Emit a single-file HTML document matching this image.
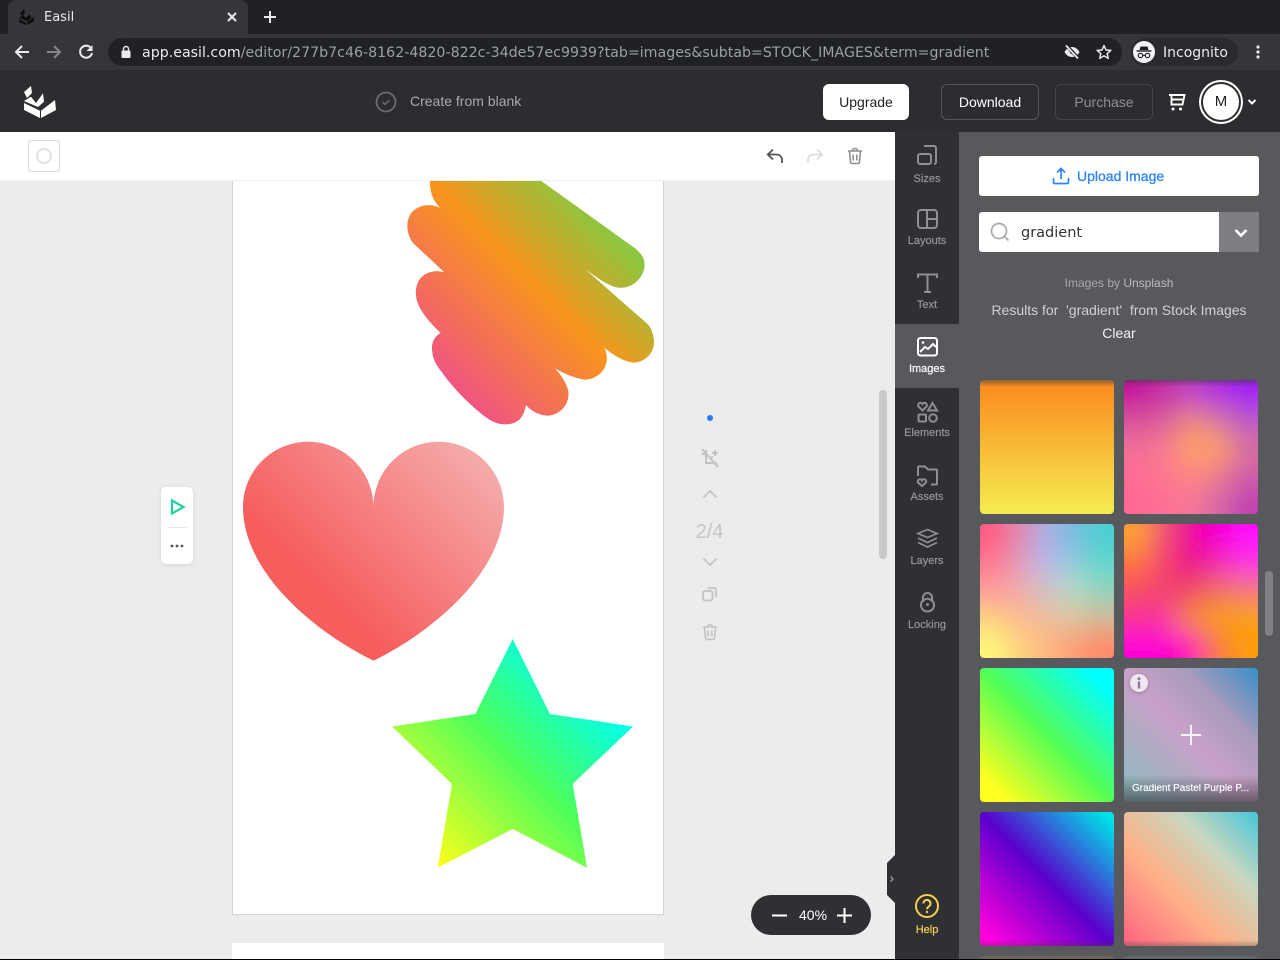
<!DOCTYPE html>
<html><head><meta charset="utf-8"><title>Easil</title>
<style>
*{box-sizing:border-box;margin:0;padding:0}
html,body{width:1280px;height:960px;overflow:hidden;background:#ececec;font-family:"Liberation Sans",sans-serif}
.a{position:absolute}
.t{position:absolute;white-space:nowrap;line-height:1}
.c{transform:translateX(-50%)}
.d{font-family:"DejaVu Sans",sans-serif}
svg{position:absolute;overflow:visible}
.th{position:absolute;width:134px;height:134px;border-radius:4px}
.m{overflow:hidden}
.lbl{position:absolute;left:895px;width:64px;text-align:center;font-size:11px;line-height:1;color:#98999d;-webkit-text-stroke:.15px #98999d}
.btn{position:absolute;top:84px;height:36px;border-radius:6px;font-size:14px;line-height:34px;text-align:center}
</style></head><body>

<!-- browser chrome -->
<div class="a" style="left:0;top:0;width:1280px;height:34px;background:#202124"></div>
<div class="a" style="left:8px;top:0;width:240px;height:34px;background:#35363a;border-radius:8px 8px 0 0"></div>
<svg style="left:18px;top:8px" width="18" height="18" viewBox="0 0 18 18"><g fill="#0d0d0d"><polygon points="2,6 6,1 7,5 4,8"/><polygon points="1,10 5,7 8,10 12,6 13,10 9,13"/><polygon points="1,11 8,15 8,17 1,14"/><polygon points="9,14 16,9 16,13 9,17"/></g></svg>
<div class="t d" style="left:44px;top:11px;font-size:13px;color:#e8eaed">Easil</div>
<svg style="left:226px;top:11px" width="12" height="12"><path d="M2 2l8 8M10 2l-8 8" stroke="#e8eaed" stroke-width="2" fill="none"/></svg>
<svg style="left:263px;top:10px" width="14" height="14"><path d="M7 1v12M1 7h12" stroke="#e8eaed" stroke-width="2" fill="none"/></svg>

<div class="a" style="left:0;top:34px;width:1280px;height:37px;background:#35363a;border-bottom:1px solid #2a2b2e"></div>
<svg style="left:14px;top:44px" width="16" height="16"><path d="M15 8H2M8 2L2 8l6 6" stroke="#e8eaed" stroke-width="2" fill="none"/></svg>
<svg style="left:46px;top:44px" width="16" height="16"><path d="M1 8h13M8 2l6 6-6 6" stroke="#85878b" stroke-width="2" fill="none"/></svg>
<svg style="left:78px;top:44px" width="16" height="16"><path d="M13.500 5A6 6 0 1 0 14 9" stroke="#e8eaed" stroke-width="2" fill="none"/><path d="M14.500 1v6h-6z" fill="#e8eaed"/></svg>
<div class="a" style="left:108px;top:38px;width:1014px;height:28px;background:#202124;border-radius:14px"></div>
<svg style="left:120px;top:45px" width="12" height="14"><rect x="1.500" y="5.500" width="9" height="7.500" rx="1" fill="#e8eaed"/><path d="M3.500 6V4a2.500 2.500 0 0 1 5 0v2" stroke="#e8eaed" stroke-width="1.400" fill="none"/></svg>
<div class="t d" style="left:142px;top:46px;font-size:14.200px;color:#e8eaed">app.easil.com<span style="color:#9aa0a6">/editor/277b7c46-8162-4820-822c-34de57ec9939?tab=images&amp;subtab=STOCK_IMAGES&amp;term=gradient</span></div>
<svg style="left:1063px;top:44px" width="18" height="16" viewBox="0 0 18 16"><path d="M1.500 8C3.500 4.500 6 3 9 3s5.500 1.500 7.500 5c-2 3.500-4.500 5-7.500 5S3.500 11.500 1.500 8z" fill="#e8eaed"/><circle cx="9" cy="8" r="2" fill="#202124"/><path d="M3 1l12 13" stroke="#202124" stroke-width="3.500"/><path d="M3 1.500l12 13" stroke="#e8eaed" stroke-width="1.800"/></svg>
<svg style="left:1096px;top:44px" width="16" height="16" viewBox="0 0 16 16"><path d="M8 1.500l2 4.500 4.800.4-3.600 3.200 1.100 4.800L8 11.900l-4.300 2.500 1.100-4.800L1.200 6.400 6 6z" fill="none" stroke="#e8eaed" stroke-width="1.500" stroke-linejoin="round"/></svg>
<div class="a" style="left:1131px;top:38px;width:107px;height:28px;background:#292a2d;border-radius:14px"></div>
<svg style="left:1133px;top:41px" width="22" height="22" viewBox="0 0 22 22"><circle cx="11" cy="11" r="11" fill="#f1f3f4"/><path d="M7.500 5.500h7l1 3.500h-9z" fill="#202124"/><rect x="3.500" y="9.300" width="15" height="1.400" fill="#202124"/><circle cx="7.500" cy="14.500" r="2.200" fill="none" stroke="#202124" stroke-width="1.200"/><circle cx="14.500" cy="14.500" r="2.200" fill="none" stroke="#202124" stroke-width="1.200"/><path d="M9.700 14.300h2.600" stroke="#202124" stroke-width="1.100"/></svg>
<div class="t d" style="left:1163px;top:46px;font-size:14px;color:#e8eaed">Incognito</div>
<svg style="left:1255px;top:44px" width="6" height="16"><circle cx="3" cy="3" r="1.600" fill="#e8eaed"/><circle cx="3" cy="8" r="1.600" fill="#e8eaed"/><circle cx="3" cy="13" r="1.600" fill="#e8eaed"/></svg>

<!-- app header -->
<div class="a" style="left:0;top:71px;width:1280px;height:61px;background:#2c2d30"></div>
<svg style="left:0;top:0" width="80" height="130"><g fill="#fff"><polygon points="24,92 31,86 32,93 27,98"/><polygon points="24,101 31,96.700 36,103 43,93.300 44,101.700 38,107"/><polygon points="24,103 40,110.700 40,118 24,110"/><polygon points="41,110.700 55,100 56,110 41,118"/></g></svg>
<svg style="left:375px;top:91px" width="22" height="22"><circle cx="11" cy="11" r="9.500" fill="none" stroke="#6b6c70" stroke-width="1.800"/><path d="M7.500 11l2.500 2.500 4.500-4.500" fill="none" stroke="#6b6c70" stroke-width="1.500"/></svg>
<div class="t" style="left:410px;top:94px;font-size:14px;color:#a9aaad">Create from blank</div>
<div class="btn" style="left:823px;width:86px;background:#fff;color:#222;line-height:36px">Upgrade</div>
<div class="btn" style="left:941px;width:98px;border:1px solid #55565a;color:#fff">Download</div>
<div class="btn" style="left:1055px;width:98px;border:1px solid #434448;color:#8f9094">Purchase</div>
<svg style="left:1168px;top:92px" width="18" height="20" viewBox="0 0 18 20"><path d="M1 3H16.500L14.500 12.500H3.500V3M3.500 7.500H15.500" fill="none" stroke="#fff" stroke-width="1.900"/><circle cx="5" cy="17" r="1.500" fill="#fff"/><circle cx="12.500" cy="17" r="1.500" fill="#fff"/></svg>
<div class="a" style="left:1199px;top:80px;width:44px;height:44px;border-radius:50%;background:#fff"></div>
<div class="a" style="left:1201px;top:82px;width:40px;height:40px;border-radius:50%;background:#2c2d30"></div>
<div class="a" style="left:1203px;top:84px;width:36px;height:36px;border-radius:50%;background:#fff;color:#222;font-size:15px;line-height:36px;text-align:center">M</div>
<svg style="left:1247px;top:98px" width="10" height="8"><path d="M1.500 2L5 5.500 8.500 2" stroke="#fff" stroke-width="2" fill="none"/></svg>

<!-- canvas -->
<div class="a" style="left:232px;top:170px;width:432px;height:745px;background:#fff;border:1px solid #d4d4d4"></div>
<div class="a" style="left:232px;top:943px;width:432px;height:17px;background:#fff"></div>
<svg style="left:0;top:0" width="895" height="960">
<defs>
<linearGradient id="g1" gradientUnits="userSpaceOnUse" x1="442" y1="372" x2="597.500" y2="217.500"><stop offset="0" stop-color="#f0567f"/><stop offset=".58" stop-color="#f8951d"/><stop offset="1" stop-color="#8dc63f"/></linearGradient>
<linearGradient id="g2" gradientUnits="userSpaceOnUse" x1="270" y1="570" x2="432" y2="408"><stop offset=".1" stop-color="#f65d5d"/><stop offset="1" stop-color="#f5abab"/></linearGradient>
<linearGradient id="g3" gradientUnits="userSpaceOnUse" x1="437" y1="868" x2="606" y2="699"><stop offset="0" stop-color="#ffff1a"/><stop offset=".556" stop-color="#4dff5c"/><stop offset="1" stop-color="#00fff0"/></linearGradient>
<filter id="bl" x="-10%" y="-10%" width="120%" height="120%"><feGaussianBlur stdDeviation=".5"/></filter>
</defs>
<path fill="url(#g1)" d="M430 170 C429 190 431 198 440 207.700 C430 203 420 205 413 211 C406 218 405 232 413 243 L444.300 272.300 C432 269 422 274 418 282 C414 291 416 301 420 308 C425 317 433 326 440.700 333 C433 337 431 345 432.300 352 C433 360 437 366 441 371 C452 387 473 409 490 420 C500 426 513 426 520 419 C524 414 525 410 526 405 C531 411 539 415 547 415.700 C560 415 569 405 568.500 393 C568 385 561 375 555 368.300 C563 373 573 378 585 379.700 C598 379 608 369 606.700 356 C606.500 353 605.500 350 604.300 347.700 C612 354 622 361 633.300 362.700 C646 362 655 352 654 340 C653 333 651 327 646.700 323.300 L585 269 C593 275 603 282 610 285 C617 289 627 289 635 283 C645 275 648 262 640 253 C638 251 637 250 635 248.300 L526 170 Z"/>
<path fill="url(#g2)" d="M373.500 507C373.500 471 344 441.700 308 441.700C272 441.700 243 471 243 507C243 575 320 635 373.500 660.600C427 635 504 575 504 507C504 471 474.500 441.700 438.500 441.700C402.500 441.700 373.500 471 373.500 507Z"/>
<polygon fill="url(#g3)" points="512.700,639 550,714 633,726.500 572.700,784 587,867.800 512.700,829 437.700,867.800 452,784 392,726.500 475.300,714"/>
</svg>

<!-- editor toolbar -->
<div class="a" style="left:0;top:132px;width:895px;height:49px;background:#fff;border-bottom:1px solid #f0f0f0"></div>
<div class="a" style="left:28px;top:140px;width:32px;height:32px;border:1px solid #dcdcdc;border-radius:3px"></div>
<svg style="left:36px;top:148px" width="16" height="16"><circle cx="8" cy="8" r="7" fill="none" stroke="#dedede" stroke-width="1.800"/></svg>
<svg style="left:766px;top:147px" width="18" height="18" viewBox="0 0 18 18"><path d="M7 2.500L1.800 7.500 7 12.500M2.500 7.500H10c3.500 0 6 2 6 5.500v3" fill="none" stroke="#555" stroke-width="1.800"/></svg>
<svg style="left:806px;top:147px" width="18" height="18" viewBox="0 0 18 18"><path d="M11 2.500l5.200 5-5.200 5M15.500 7.500H8c-3.500 0-6 2-6 5.500v3" fill="none" stroke="#dcdcdc" stroke-width="1.800"/></svg>
<svg style="left:846px;top:147px" width="18" height="18" viewBox="0 0 18 18"><path d="M2 4h14M6.500 4c0-1.500 1-2.500 2.500-2.500s2.500 1 2.500 2.500M3.500 4l1 11a1.500 1.500 0 0 0 1.500 1.500h6a1.500 1.500 0 0 0 1.500-1.500l1-11M7.200 7.500v6M10.800 7.500v6" fill="none" stroke="#8f8f8f" stroke-width="1.600"/></svg>

<!-- left play widget -->
<div class="a" style="left:161px;top:487px;width:32px;height:77px;background:#fff;border-radius:5px;box-shadow:0 1px 4px rgba(0,0,0,.1)"></div>
<svg style="left:170px;top:499px" width="16" height="16"><path d="M2 1.500L13.500 8 2 14.500z" fill="none" stroke="#1dd1a1" stroke-width="2.200"/></svg>
<div class="a" style="left:167px;top:527px;width:20px;height:1px;background:#e6e6e6"></div>
<svg style="left:170px;top:543px" width="14" height="6"><circle cx="2" cy="3" r="1.400" fill="#555"/><circle cx="7" cy="3" r="1.400" fill="#555"/><circle cx="12" cy="3" r="1.400" fill="#555"/></svg>

<!-- page controls -->
<div class="a" style="left:707px;top:415px;width:6px;height:6px;border-radius:50%;background:#2c7bf6"></div>
<svg style="left:700px;top:448px" width="20" height="20" viewBox="0 0 20 20"><g fill="none" stroke="#c3c3c3" stroke-width="2"><path d="M2 1l16 18M6 2v13h11M2 6h4M15 2v6M12 5h6M12 8v2"/></g></svg>
<svg style="left:702px;top:488px" width="16" height="12"><path d="M1.500 9.500L8 3l6.500 6.500" fill="none" stroke="#c8c8c8" stroke-width="2"/></svg>
<div class="t c" style="left:709.500px;top:522px;font-size:20px;color:#c4c4c4">2/4</div>
<svg style="left:702px;top:556px" width="16" height="12"><path d="M1.500 2.500L8 9l6.500-6.500" fill="none" stroke="#c8c8c8" stroke-width="2"/></svg>
<svg style="left:702px;top:586px" width="16" height="16"><rect x="1" y="5" width="9.500" height="9.500" rx="2" fill="none" stroke="#c3c3c3" stroke-width="1.800"/><path d="M5.500 2H12a2 2 0 0 1 2 2v7" fill="none" stroke="#c3c3c3" stroke-width="1.800"/></svg>
<svg style="left:701px;top:623px" width="18" height="18" viewBox="0 0 18 18"><path d="M2 4h14M6.500 4c0-1.500 1-2.500 2.500-2.500s2.500 1 2.500 2.500M3.500 4l1 11a1.500 1.500 0 0 0 1.500 1.500h6a1.500 1.500 0 0 0 1.500-1.500l1-11M7.200 7.500v6M10.800 7.500v6" fill="none" stroke="#c3c3c3" stroke-width="1.600"/></svg>

<div class="a" style="left:879px;top:390px;width:8px;height:169px;background:#c9c9c9;border-radius:4px"></div>

<!-- zoom control -->
<div class="a" style="left:751px;top:895px;width:120px;height:40px;background:#2f3034;border-radius:20px"></div>
<svg style="left:771px;top:907px" width="90" height="18"><path d="M1 8.500h15M66 8.500h15M73.500 1v15" stroke="#fff" stroke-width="2" fill="none"/></svg>
<div class="t" style="left:799px;top:908px;font-size:14px;color:#fff">40%</div>

<!-- sidebar -->
<div class="a" style="left:895px;top:132px;width:64px;height:828px;background:#2f3034"></div>
<div class="a" style="left:959px;top:132px;width:321px;height:828px;background:#58595d"></div>
<div class="a" style="left:895px;top:324px;width:64px;height:64px;background:#58595d"></div>
<div class="a" style="left:895px;top:312px;width:64px;height:12px;background:#2f3034;border-radius:0 0 8px 0"></div>
<div class="a" style="left:895px;top:388px;width:64px;height:12px;background:#2f3034;border-radius:0 8px 0 0"></div>
<svg style="left:887px;top:855px" width="8" height="48"><path d="M8 0L0 8v32l8 8z" fill="#2f3034"/><path d="M3.500 21.500L6 24l-2.500 2.500" stroke="#9a9b9f" stroke-width="1.300" fill="none"/></svg>

<svg style="left:895px;top:132px" width="64" height="520" viewBox="0 0 64 520"><g fill="none" stroke="#8e8f93" stroke-width="2">
<path d="M29 14h10a2 2 0 0 1 2 2v14a2 2 0 0 1-2 2"/><rect x="23" y="22" width="13" height="10" rx="2"/>
<rect x="23" y="78" width="19" height="18" rx="3"/><path d="M32 78v18M32 87h10"/>
<path d="M23 146v-3.500h19v3.500M32.500 142.500v17.500M29 160h7"/>
</g>
<g fill="none" stroke="#fff" stroke-width="2"><rect x="23" y="206" width="19" height="17.500" rx="2.500"/><path d="M25 220l5-5 3 2 5-5 3 3"/></g><circle cx="28" cy="210.500" r="1.300" fill="#fff"/>
<g fill="none" stroke="#8e8f93" stroke-width="2">
<path d="M27.500 278.500l-4-4a2.300 2.300 0 0 1 4-2.500 2.300 2.300 0 0 1 4 2.500z"/><path d="M37.500 271l4.500 7.500h-9z"/>
<rect x="23.500" y="282.500" width="7.500" height="7" rx="1"/><circle cx="38" cy="286" r="3.800"/>
<path d="M23 344v-8.500a1 1 0 0 1 1-1h6l3 3h8a1 1 0 0 1 1 1v13a1 1 0 0 1-1 1h-5"/><path d="M27 354l-4-3.500a2 2 0 0 1 4-2 2 2 0 0 1 4 2z"/>
<path d="M32.500 397.500l9.500 4-9.500 4-9.500-4zM23 406l9.500 4.500 9.500-4.500M23 410.500l9.500 4.500 9.500-4.500" stroke-width="1.700"/>
<path d="M28 470v-4.500a4.500 4.500 0 0 1 9 0v4.500"/><path d="M32.500 466.500c4 1.500 6.500 2.500 6.500 6.500 0 4-3 6.500-6.500 6.500s-6.500-2.500-6.500-6.500c0-4 2.500-5 6.500-6.500z"/>
</g><circle cx="32.500" cy="472.500" r="1.500" fill="#8e8f93"/></svg>
<div class="lbl" style="top:174px">Sizes</div>
<div class="lbl" style="top:236px">Layouts</div>
<div class="lbl" style="top:300px">Text</div>
<div class="lbl" style="top:364px;color:#fff;-webkit-text-stroke:.2px #fff">Images</div>
<div class="lbl" style="top:428px">Elements</div>
<div class="lbl" style="top:492px">Assets</div>
<div class="lbl" style="top:556px">Layers</div>
<div class="lbl" style="top:620px">Locking</div>
<svg style="left:914px;top:893px" width="26" height="26"><circle cx="13" cy="13" r="11" fill="none" stroke="#f6d04d" stroke-width="2"/><path d="M9.500 10.500a3.500 3.500 0 1 1 5.500 2.800c-1.300.9-2 1.500-2 3" fill="none" stroke="#f6d04d" stroke-width="2"/><circle cx="13" cy="19" r="1.200" fill="#f6d04d"/></svg>
<div class="lbl" style="top:925px;color:#f6d04d;-webkit-text-stroke:.2px #f6d04d">Help</div>

<!-- right panel -->
<div class="a" style="left:979px;top:156px;width:280px;height:40px;background:#fff;border-radius:3px"></div>
<svg style="left:1052px;top:167px" width="18" height="18" viewBox="0 0 18 18"><path d="M9 12V2M5 5.500L9 1.500l4 4M1.500 11v4.500a1 1 0 0 0 1 1h13a1 1 0 0 0 1-1V11" fill="none" stroke="#2c84f6" stroke-width="1.700"/></svg>
<div class="t" style="left:1077px;top:169px;font-size:14px;color:#2c84f6;-webkit-text-stroke:.3px #2c84f6">Upload Image</div>
<div class="a" style="left:979px;top:212px;width:280px;height:40px;background:#fff;border-radius:3px;overflow:hidden"><div class="a" style="left:240px;top:0;width:40px;height:40px;background:#7c7e82"></div></div>
<svg style="left:990px;top:222px" width="20" height="20"><circle cx="9" cy="9" r="7.500" fill="none" stroke="#a9a9a9" stroke-width="1.700"/><path d="M14.500 14.500l4 4" stroke="#a9a9a9" stroke-width="1.700"/></svg>
<div class="t d" style="left:1021px;top:226px;font-size:14.500px;color:#333">gradient</div>
<svg style="left:1234px;top:228px" width="14" height="10"><path d="M1.500 2L7 7.500 12.500 2" fill="none" stroke="#fff" stroke-width="2.600"/></svg>
<div class="t c" style="left:1119px;top:277px;font-size:12px;color:#a8a9ac">Images by <span style="color:#bcbdc0">Unsplash</span></div>
<div class="t c" style="left:1119px;top:303px;font-size:14px;color:#d0d1d3">Results for &nbsp;'gradient'&nbsp; from Stock Images</div>
<div class="t c" style="left:1119px;top:326px;font-size:14px;color:#f2f2f2">Clear</div>

<!-- thumbnails -->
<div class="th" style="left:980px;top:380px;background:linear-gradient(180deg,rgba(60,60,60,.55) 0,rgba(60,60,60,0) 7px),linear-gradient(180deg,#fb8d1e 5%,#f5e950 96%)"></div>

<div class="th m" style="left:1124px;top:380px"><svg width="134" height="134" viewBox="0 0 5 5" style="left:0;top:0"><g filter="url(#bl)">
<rect x="-2" y="-2" width="3" height="3" fill="#c4109c"/><rect x="1" y="-2" width="1" height="3" fill="#c62ea6"/><rect x="2" y="-2" width="1" height="3" fill="#c040c8"/><rect x="3" y="-2" width="1" height="3" fill="#b02ae0"/><rect x="4" y="-2" width="3" height="3" fill="#a21cf5"/>
<rect x="-2" y="1" width="3" height="1" fill="#d8509c"/><rect x="1" y="1" width="1" height="1" fill="#d85a9c"/><rect x="2" y="1" width="1" height="1" fill="#ee8a80"/><rect x="3" y="1" width="1" height="1" fill="#d878a0"/><rect x="4" y="1" width="3" height="1" fill="#bb58c8"/>
<rect x="-2" y="2" width="3" height="1" fill="#f0709a"/><rect x="1" y="2" width="1" height="1" fill="#f87c90"/><rect x="2" y="2" width="1" height="1" fill="#ffa060"/><rect x="3" y="2" width="1" height="1" fill="#ffa064"/><rect x="4" y="2" width="3" height="1" fill="#d8709c"/>
<rect x="-2" y="3" width="3" height="1" fill="#ff6c94"/><rect x="1" y="3" width="1" height="1" fill="#ff7890"/><rect x="2" y="3" width="1" height="1" fill="#ff8a80"/><rect x="3" y="3" width="1" height="1" fill="#f08088"/><rect x="4" y="3" width="3" height="1" fill="#d060a8"/>
<rect x="-2" y="4" width="3" height="3" fill="#ff6b94"/><rect x="1" y="4" width="1" height="3" fill="#ff6e94"/><rect x="2" y="4" width="1" height="3" fill="#f87898"/><rect x="3" y="4" width="1" height="3" fill="#d86aa8"/><rect x="4" y="4" width="3" height="3" fill="#c040b0"/>
</g></svg><div class="a" style="left:0;top:0;width:134px;height:7px;background:linear-gradient(180deg,rgba(60,60,60,.5),rgba(60,60,60,0))"></div></div>

<div class="th m" style="left:980px;top:524px"><svg width="134" height="134" viewBox="0 0 5 5" style="left:0;top:0"><g filter="url(#bl)">
<rect x="-2" y="-2" width="3" height="3" fill="#ff5c82"/><rect x="1" y="-2" width="1" height="3" fill="#e088b0"/><rect x="2" y="-2" width="1" height="3" fill="#a8b0e8"/><rect x="3" y="-2" width="1" height="3" fill="#78bce0"/><rect x="4" y="-2" width="3" height="3" fill="#48d0d2"/>
<rect x="-2" y="1" width="3" height="1" fill="#ff7a90"/><rect x="1" y="1" width="1" height="1" fill="#e0a0c0"/><rect x="2" y="1" width="1" height="1" fill="#bcb8ec"/><rect x="3" y="1" width="1" height="1" fill="#90d0dc"/><rect x="4" y="1" width="3" height="1" fill="#60d8cc"/>
<rect x="-2" y="2" width="3" height="1" fill="#ff9c9c"/><rect x="1" y="2" width="1" height="1" fill="#f0aaa8"/><rect x="2" y="2" width="1" height="1" fill="#d0c4c4"/><rect x="3" y="2" width="1" height="1" fill="#b4dcc4"/><rect x="4" y="2" width="3" height="1" fill="#90d4bc"/>
<rect x="-2" y="3" width="3" height="1" fill="#ffd080"/><rect x="1" y="3" width="1" height="1" fill="#ffb890"/><rect x="2" y="3" width="1" height="1" fill="#f0c0a0"/><rect x="3" y="3" width="1" height="1" fill="#d8c8a0"/><rect x="4" y="3" width="3" height="1" fill="#d0b898"/>
<rect x="-2" y="4" width="3" height="3" fill="#fff87a"/><rect x="1" y="4" width="1" height="3" fill="#ffd080"/><rect x="2" y="4" width="1" height="3" fill="#ffb880"/><rect x="3" y="4" width="1" height="3" fill="#ff9c78"/><rect x="4" y="4" width="3" height="3" fill="#ff8a66"/>
</g></svg></div>

<div class="th m" style="left:1124px;top:524px"><svg width="134" height="134" viewBox="0 0 5 5" style="left:0;top:0"><g filter="url(#bl)">
<rect x="-2" y="-2" width="3" height="3" fill="#ffa030"/><rect x="1" y="-2" width="1" height="3" fill="#f04a70"/><rect x="2" y="-2" width="1" height="3" fill="#ec0098"/><rect x="3" y="-2" width="1" height="3" fill="#f505d0"/><rect x="4" y="-2" width="3" height="3" fill="#ff10ff"/>
<rect x="-2" y="1" width="3" height="1" fill="#ff7040"/><rect x="1" y="1" width="1" height="1" fill="#f54070"/><rect x="2" y="1" width="1" height="1" fill="#ec0088"/><rect x="3" y="1" width="1" height="1" fill="#f02aa8"/><rect x="4" y="1" width="3" height="1" fill="#ff30e0"/>
<rect x="-2" y="2" width="3" height="1" fill="#f85060"/><rect x="1" y="2" width="1" height="1" fill="#f54070"/><rect x="2" y="2" width="1" height="1" fill="#f04a60"/><rect x="3" y="2" width="1" height="1" fill="#f2705c"/><rect x="4" y="2" width="3" height="1" fill="#f47a70"/>
<rect x="-2" y="3" width="3" height="1" fill="#fa3090"/><rect x="1" y="3" width="1" height="1" fill="#f830a0"/><rect x="2" y="3" width="1" height="1" fill="#f88a28"/><rect x="3" y="3" width="1" height="1" fill="#fba010"/><rect x="4" y="3" width="3" height="1" fill="#fba010"/>
<rect x="-2" y="4" width="3" height="3" fill="#ff00d8"/><rect x="1" y="4" width="1" height="3" fill="#ff00d0"/><rect x="2" y="4" width="1" height="3" fill="#ff10b0"/><rect x="3" y="4" width="1" height="3" fill="#fa7c30"/><rect x="4" y="4" width="3" height="3" fill="#ff9c10"/>
</g></svg></div>

<div class="th" style="left:980px;top:668px;background:linear-gradient(45deg,#ffff1f 10%,#55ff55 50%,#00ffff 90%)"></div>
<div class="th" style="left:1124px;top:668px;overflow:hidden;background:linear-gradient(45deg,#8fbac0 5%,#c8a0c8 48%,#a89cbc 72%,#4090c8 98%)">
<div class="a" style="left:0;bottom:0;width:134px;height:27px;background:linear-gradient(180deg,rgba(30,30,30,0),rgba(30,30,30,.55))"></div>
<div class="t" style="left:8px;top:116px;font-size:10px;color:#fff;width:124px;overflow:hidden;-webkit-text-stroke:.15px #fff">Gradient Pastel Purple P...</div></div>
<div class="a" style="left:1130px;top:674px;width:18px;height:18px;border-radius:50%;background:#efe6f2;box-shadow:0 1px 3px rgba(0,0,0,.25)"></div>
<svg style="left:1130px;top:674px" width="18" height="18"><circle cx="9" cy="4.800" r="1.500" fill="#8a7a95"/><rect x="7.800" y="7.500" width="2.400" height="7" fill="#8a7a95"/></svg>
<svg style="left:1181px;top:725px" width="20" height="20"><path d="M10 0v20M0 10h20" stroke="#fff" stroke-width="1.700"/></svg>
<div class="th" style="left:980px;top:812px;background:linear-gradient(0deg,rgba(60,60,60,.3) 0,rgba(60,60,60,0) 6px),linear-gradient(45deg,#ff00dd 6%,#5a00cc 50%,#00e0e8 95%)"></div>
<div class="th" style="left:1124px;top:812px;background:linear-gradient(0deg,rgba(60,60,60,.35) 0,rgba(60,60,60,0) 6px),linear-gradient(45deg,#ff6a80 4%,#ffb088 38%,#c9d6c0 70%,#50c8d8 97%)"></div>
<div class="a" style="left:980px;top:956px;width:134px;height:4px;background:#6e6458;border-radius:4px 4px 0 0"></div>
<div class="a" style="left:1124px;top:956px;width:134px;height:4px;background:#5e6670;border-radius:4px 4px 0 0"></div>
<div class="a" style="left:1265px;top:571px;width:8px;height:65px;background:#808185;border-radius:4px"></div>
<div class="a" style="left:0;top:959px;width:1280px;height:1px;background:#000"></div>
</body></html>
